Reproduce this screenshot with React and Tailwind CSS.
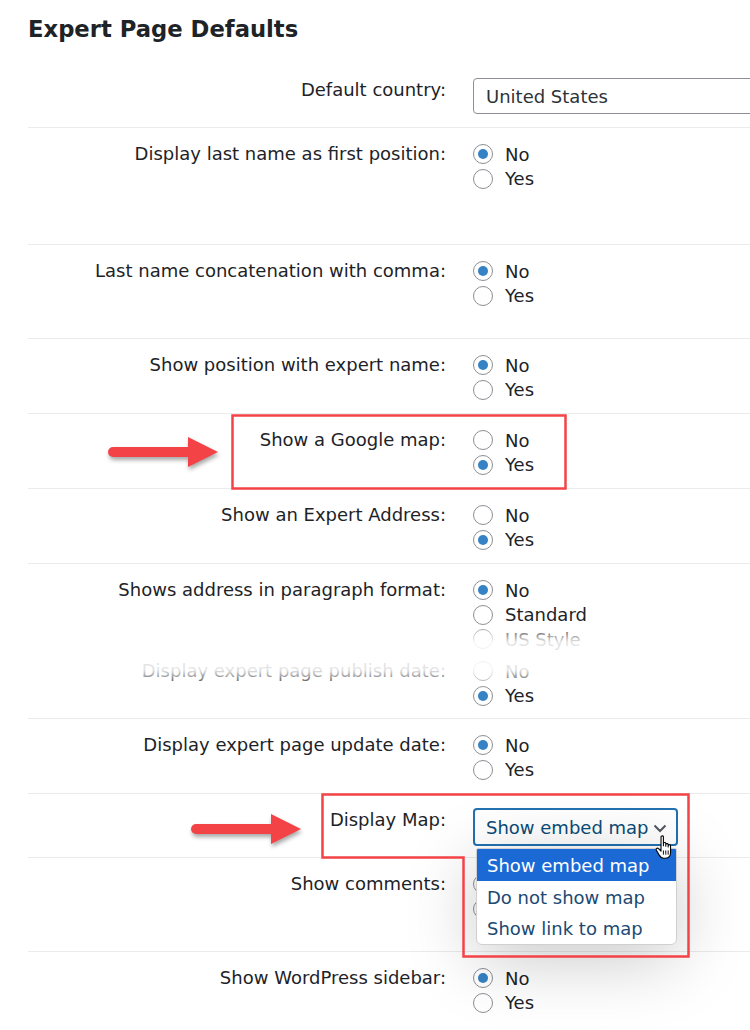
import React from "react";

const Radio = ({ checked }) => (
  <span className="w-5 h-5 rounded-full border border-[#8c8f94] bg-white flex items-center justify-center shrink-0">
    {checked && <span className="w-[10px] h-[10px] rounded-full bg-[#3582c4]" />}
  </span>
);

const RadioList = ({ options, value, hidden = false }) => (
  <div className="flex flex-col">
    {options.map((opt) => (
      <label key={opt} className="flex items-center gap-3 h-[24.5px]">
        <Radio checked={opt === value} />
        <span className={hidden ? "invisible" : ""}>{opt}</span>
      </label>
    ))}
  </div>
);

const Row = ({ label, height, border = true, children }) => (
  <div className={`flex ${height} ${border ? "border-b border-[#ebebeb]" : ""}`}>
    <div className="w-[418px] shrink-0 text-right pt-[14px] leading-[24.5px]">{label}</div>
    <div className="pl-[27px] pt-[14px]">{children}</div>
  </div>
);

const Arrow = ({ className }) => (
  <svg
    className={`absolute pointer-events-none drop-shadow-[1px_3px_2px_rgba(0,0,0,0.35)] ${className}`}
    width="116"
    height="34"
    viewBox="0 0 116 34"
  >
    <path d="M9 12h77v10H9a5 5 0 0 1 0-10z" fill="#f44347" />
    <path d="M84 2l30 15-30 15z" fill="#f44347" />
  </svg>
);

export default function App() {
  return (
    <div
      className="relative w-[750px] h-[1030px] overflow-hidden bg-white pl-[28px] text-[18px] text-[#1d2327]"
      style={{ fontFamily: '"DejaVu Sans", sans-serif' }}
    >
      {/* Title */}
      <div className="h-[63px] pt-[15px]">
        <h2 className="text-[22.7px] font-bold leading-[1.3]">Expert Page Defaults</h2>
      </div>

      {/* Default country */}
      <div className="flex h-[65px] border-b border-[#ebebeb]">
        <div className="w-[418px] shrink-0 text-right pt-[15px] leading-[24.5px]">Default country:</div>
        <div className="pl-[27px] pt-[15px]">
          <div className="w-[320px] h-[36px] border border-[#8c8f94] rounded-[4px] pl-[12px] flex items-center text-[#2c3338]">
            United States
          </div>
        </div>
      </div>

      <Row label="Display last name as first position:" height="h-[117px]">
        <RadioList options={["No", "Yes"]} value="No" />
      </Row>
      <Row label="Last name concatenation with comma:" height="h-[94px]">
        <RadioList options={["No", "Yes"]} value="No" />
      </Row>
      <Row label="Show position with expert name:" height="h-[75px]">
        <RadioList options={["No", "Yes"]} value="No" />
      </Row>
      <Row label="Show a Google map:" height="h-[75px]">
        <RadioList options={["No", "Yes"]} value="Yes" />
      </Row>
      <Row label="Show an Expert Address:" height="h-[75px]">
        <RadioList options={["No", "Yes"]} value="Yes" />
      </Row>
      <Row label="Shows address in paragraph format:" height="h-[81px]" border={false}>
        <RadioList options={["No", "Standard", "US Style"]} value="No" />
      </Row>
      <Row label="Display expert page publish date:" height="h-[74px]">
        <RadioList options={["No", "Yes"]} value="Yes" />
      </Row>
      <Row label="Display expert page update date:" height="h-[75px]">
        <RadioList options={["No", "Yes"]} value="No" />
      </Row>

      {/* Display Map select, opened */}
      <div className="flex h-[64px] border-b border-[#ebebeb]">
        <div className="w-[418px] shrink-0 text-right pt-[14px] leading-[24.5px]">Display Map:</div>
        <div className="pl-[27px] pt-[14px]">
          <div className="relative">
            <div className="w-[205px] h-[38px] border-2 border-[#2271b1] rounded-[4px] pl-[11px] pr-[9px] flex items-center justify-between text-[#0a4b78]">
              <span>Show embed map</span>
              <svg width="14" height="9" viewBox="0 0 14 9" className="mt-[2px]">
                <path d="M1.5 1.5l5.5 5.5 5.5-5.5" fill="none" stroke="#50575e" strokeWidth="2" />
              </svg>
            </div>
            <ul className="absolute left-[3px] top-[40px] w-[201px] bg-white rounded-b-[6px] rounded-t-[2px] overflow-hidden border border-[#d0d0d0] shadow-[0_14px_70px_rgba(0,0,0,0.22)] text-[#1b4a72]">
              <li className="h-[32px] pl-[10px] flex items-center bg-[#1a69d4] text-white">Show embed map</li>
              <li className="h-[32px] pl-[10px] flex items-center">Do not show map</li>
              <li className="h-[31px] pl-[10px] flex items-center">Show link to map</li>
            </ul>
            {/* hand cursor */}
            <svg className="absolute left-[182px] top-[27px]" width="18" height="25" viewBox="0 0 15 21">
              <path
                d="M5 1.5c0-1 2-1 2 0V9V7c0-1 2-1 2 0v2.5V8c0-1 2-1 2 0v2V9c0-1 2-1 2 0v5.5c0 3-1.6 5-4.2 5H7.2c-2 0-3-1.3-4-3L1 12.6c-.6-1 .8-2.1 1.8-1.2L5 13.5z"
                fill="#fff"
                stroke="#000"
                strokeWidth="0.9"
                strokeLinejoin="round"
              />
              <path d="M7 13v3.5M9 13v3.5M11 13v3.5" stroke="#000" strokeWidth="0.8" />
            </svg>
          </div>
        </div>
      </div>

      <Row label="Show comments:" height="h-[94px]">
        <RadioList options={["No", "Yes"]} value="No" hidden />
      </Row>
      <Row label="Show WordPress sidebar:" height="h-[80px]" border={false}>
        <RadioList options={["No", "Yes"]} value="No" />
      </Row>

      {/* faded cut between screenshots */}
      <div className="absolute left-0 right-0 top-[624px] h-[64px] pointer-events-none bg-[linear-gradient(to_bottom,rgba(255,255,255,0)_0%,rgba(255,255,255,0.88)_28%,rgba(255,255,255,0.88)_72%,rgba(255,255,255,0)_100%)]" />

      {/* annotations */}
      <svg className="absolute left-0 top-0 pointer-events-none" width="750" height="1030">
        <rect x="232.5" y="415.5" width="333" height="73" fill="none" stroke="#f44347" strokeWidth="2.5" />
        <path d="M322.5 794.5H688.5V956.5H463.5V857.5H322.5Z" fill="none" stroke="#f44347" strokeWidth="2.5" />
      </svg>
      <Arrow className="left-[104px] top-[435px]" />
      <Arrow className="left-[187px] top-[812px]" />
    </div>
  );
}
